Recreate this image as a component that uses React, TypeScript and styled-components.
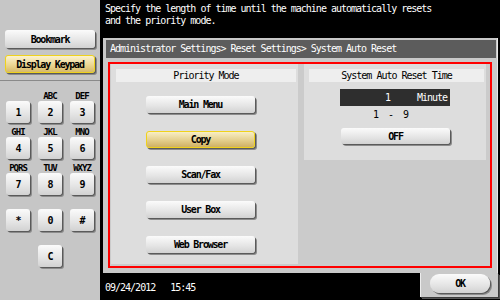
import React from 'react';
import styled, { createGlobalStyle, css } from 'styled-components';

const Global = createGlobalStyle`
  html, body { margin: 0; padding: 0; background: #000; }
  body { width: 500px; height: 300px; overflow: hidden; }
`;

const mono = `"DejaVu Sans Mono", "Liberation Mono", monospace`;

const Screen = styled.div`
  width: 500px;
  height: 300px;
  display: grid;
  grid-template-columns: 100px 400px;
  font-family: ${mono};
  font-size: 10px;
  letter-spacing: -1px;
  color: #000;
`;

const Side = styled.div`
  background: #c6c6c6;
  display: flex;
  flex-direction: column;
`;

const SideTop = styled.div`
  height: 81px;
  box-sizing: border-box;
  border-bottom: 1px solid #8a8a8a;
  padding: 30px 5px 0;
  display: flex;
  flex-direction: column;
  gap: 7px;
`;

const raised = css`
  background: linear-gradient(#fbfbfb, #e6e6e6 55%, #d2d2d2);
  box-shadow: 1px 1px 0 #5a5a5a, 2px 2px 0 #8c8c8c;
  font-weight: bold;
  letter-spacing: -1.2px;
`;

const SideButton = styled.div<{ $active?: boolean }>`
  width: 90px;
  height: 18px;
  box-sizing: border-box;
  border-radius: 3px;
  display: flex;
  align-items: center;
  justify-content: center;
  ${raised}
  ${(p) =>
    p.$active &&
    css`
      background: linear-gradient(#fbf2cf, #ecd793 55%, #d6b96a);
      border: 1px solid #efd21c;
    `}
`;

const Keypad = styled.div`
  padding: 10px 5px 0 6px;
  display: grid;
  grid-template-columns: repeat(3, 24px);
  column-gap: 8px;
  row-gap: 4px;
`;

const KeyCell = styled.div`
  display: flex;
  flex-direction: column;
  align-items: center;
`;

const KeyLetters = styled.div`
  height: 10px;
  line-height: 10px;
  font-size: 9px;
  white-space: nowrap;
  font-weight: bold;
`;

const Key = styled.div`
  width: 24px;
  height: 22px;
  border-radius: 3px;
  display: flex;
  align-items: center;
  justify-content: center;
  ${raised}
`;

const Main = styled.div`
  background: #000;
  display: flex;
  flex-direction: column;
`;

const Message = styled.div`
  height: 38px;
  box-sizing: border-box;
  padding: 3px 0 0 5px;
  color: #fff;
  line-height: 11.5px;
`;

const Panel = styled.div`
  margin-left: 3px;
  width: 395px;
  height: 235px;
  box-sizing: border-box;
  background: #c9c9c9;
  padding: 2px 2px 0 3px;
  display: flex;
  flex-direction: column;
  box-shadow: inset -1px 0 0 #e8e8e8;
`;

const Breadcrumb = styled.div`
  height: 18px;
  line-height: 18px;
  background: #5c5c5c;
  color: #fff;
  padding-left: 4px;
`;

const RedBox = styled.div`
  margin: 4px 4px 0 2px;
  height: 206px;
  box-sizing: border-box;
  border: 2px solid #ff0000;
  background: #cbcbcb;
  padding: 0 4px 2px 1px;
  display: flex;
  gap: 6px;
`;

const Section = styled.div<{ $w: number; $h?: number }>`
  width: ${(p) => p.$w}px;
  ${(p) => (p.$h ? `height: ${p.$h}px; align-self: flex-start;` : '')}
  background: #dddddd;
  display: flex;
  flex-direction: column;
`;

const SectionTitle = styled.div`
  margin: 5px 2px 0 5px;
  height: 13px;
  line-height: 13px;
  background: #eeeeee;
  text-align: center;
`;

const ModeList = styled.div`
  padding-left: 35px;
  margin-top: 14px;
  display: flex;
  flex-direction: column;
  gap: 18px;
`;

const ModeButton = styled.div<{ $active?: boolean; $h?: number }>`
  width: 109px;
  height: ${(p) => p.$h ?? 17}px;
  box-sizing: border-box;
  border-radius: 3px;
  display: flex;
  align-items: center;
  justify-content: center;
  ${raised}
  ${(p) =>
    p.$active &&
    css`
      background: linear-gradient(#f8eec6, #e4cf8c 55%, #cfb064);
      border: 1px solid #f0d21a;
    `}
`;

const ValueBox = styled.div`
  margin: 7px 0 0 36px;
  width: 110px;
  height: 17px;
  background: #2e2e2e;
  color: #fff;
  display: flex;
  align-items: center;
`;

const ValueNum = styled.span`
  width: 50px;
  text-align: right;
`;

const ValueUnit = styled.span`
  margin-left: auto;
  padding-right: 3px;
`;

const Range = styled.div`
  margin: 3px 0 0 69px;
  height: 12px;
  line-height: 12px;
  white-space: pre;
`;

const OffButton = styled(ModeButton)`
  margin: 7px 0 0 37px;
`;

const Footer = styled.div`
  height: 27px;
  display: flex;
  align-items: flex-start;
`;

const DateText = styled.div`
  flex: 1;
  color: #fff;
  padding: 9px 0 0 5px;
  white-space: pre;
`;

const OkTab = styled.div`
  width: 78px;
  height: 24px;
  box-sizing: border-box;
  margin-right: 2px;
  background: #c9c9c9;
  border-left: 1px solid #ededed;
  box-shadow: 1px 1px 0 #3c3c3c, 2px 2px 0 #555;
  padding: 1px 0 0 9px;
`;

const OkButton = styled.div`
  width: 60px;
  height: 19px;
  border-radius: 9px;
  display: flex;
  align-items: center;
  justify-content: center;
  ${raised}
`;

const keys: { l: string; k: string }[][] = [
  [
    { l: '', k: '1' },
    { l: 'ABC', k: '2' },
    { l: 'DEF', k: '3' },
  ],
  [
    { l: 'GHI', k: '4' },
    { l: 'JKL', k: '5' },
    { l: 'MNO', k: '6' },
  ],
  [
    { l: 'PQRS', k: '7' },
    { l: 'TUV', k: '8' },
    { l: 'WXYZ', k: '9' },
  ],
  [
    { l: '', k: '*' },
    { l: '', k: '0' },
    { l: '', k: '#' },
  ],
];

const modes = ['Main Menu', 'Copy', 'Scan/Fax', 'User Box', 'Web Browser'];

export default function App() {
  return (
    <>
      <Global />
      <Screen>
        <Side>
          <SideTop>
            <SideButton>Bookmark</SideButton>
            <SideButton $active>Display Keypad</SideButton>
          </SideTop>
          <Keypad>
            {keys.flat().map((c) => (
              <KeyCell key={c.k}>
                <KeyLetters>{c.l}</KeyLetters>
                <Key>{c.k}</Key>
              </KeyCell>
            ))}
            <span />
            <KeyCell>
              <KeyLetters />
              <Key>C</Key>
            </KeyCell>
          </Keypad>
        </Side>
        <Main>
          <Message>
            Specify the length of time until the machine automatically resets
            <br />
            and the priority mode.
          </Message>
          <Panel>
            <Breadcrumb>Administrator Settings&gt; Reset Settings&gt; System Auto Reset</Breadcrumb>
            <RedBox>
              <Section $w={187}>
                <SectionTitle>Priority Mode</SectionTitle>
                <ModeList>
                  {modes.map((m) => (
                    <ModeButton key={m} $active={m === 'Copy'}>
                      {m}
                    </ModeButton>
                  ))}
                </ModeList>
              </Section>
              <Section $w={182} $h={96}>
                <SectionTitle>System Auto Reset Time</SectionTitle>
                <ValueBox>
                  <ValueNum>1</ValueNum>
                  <ValueUnit>Minute</ValueUnit>
                </ValueBox>
                <Range>{'1  -  9'}</Range>
                <OffButton $h={16}>OFF</OffButton>
              </Section>
            </RedBox>
          </Panel>
          <Footer>
            <DateText>{'09/24/2012   15:45'}</DateText>
            <OkTab>
              <OkButton>OK</OkButton>
            </OkTab>
          </Footer>
        </Main>
      </Screen>
    </>
  );
}
